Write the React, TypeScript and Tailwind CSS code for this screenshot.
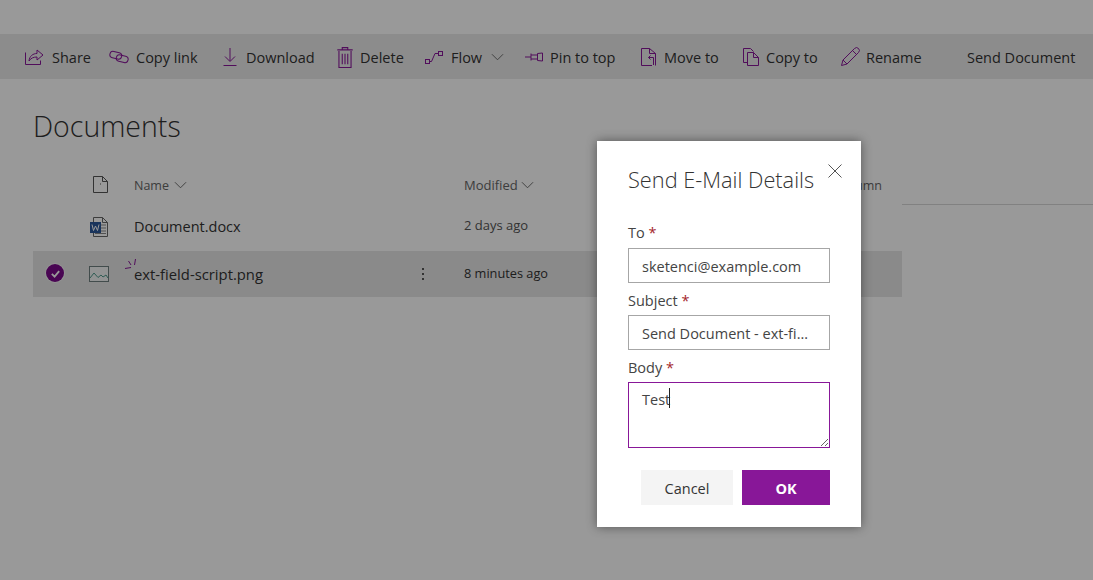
const purple = '#881798'

function Icon({ children, className }: { children: React.ReactNode; className?: string }) {
  return (
    <svg viewBox="0 0 20 20" fill="none" stroke={purple} strokeWidth="1" className={className ?? 'w-5 h-5 shrink-0'}>
      {children}
    </svg>
  )
}

function Chevron({ className }: { className: string }) {
  return (
    <svg viewBox="0 0 14 8" fill="none" stroke="#666" strokeWidth="1" className={className}>
      <path d="M1 1l6 6 6-6" />
    </svg>
  )
}

const icons = {
  share: (
    <Icon>
      <path d="M1.500 5.500v12h15v-4" />
      <path d="M5 14c.5-5 4-7.500 8-7.500V3l6 5-6 5V10c-3.500 0-6 1-8 4z" />
    </Icon>
  ),
  link: (
    <Icon>
      <rect x="0.800" y="5" width="12" height="6.500" rx="3.250" transform="rotate(14 6.800 8.250)" />
      <rect x="7.200" y="8.500" width="12" height="6.500" rx="3.250" transform="rotate(14 13.200 11.750)" />
    </Icon>
  ),
  download: (
    <Icon>
      <path d="M10 1v13M5 9.500l5 5 5-5M3.500 18.500h13" />
    </Icon>
  ),
  trash: (
    <Icon className="w-[22px] h-[22px] shrink-0">
      <path d="M4.500 4.500v15h11v-15M3 3.500h14M7.500 3.500V1.500h5v2M7.500 7v9.500M10 7v9.500M12.500 7v9.500" />
    </Icon>
  ),
  flow: (
    <Icon>
      <rect x="1.500" y="12.500" width="4" height="4" />
      <rect x="14.500" y="4.500" width="4" height="4" />
      <path d="M6 14.500h1.500L11 6.500h3" />
    </Icon>
  ),
  pin: (
    <Icon>
      <path d="M1 10h6M7 6.500v7M7 8h6.500M7 12h6.500M13.500 6.500l5-.5v8l-5-.5z" />
    </Icon>
  ),
  move: (
    <Icon>
      <path d="M13 18.500H2.500v-17h8l6 5v12" />
      <path d="M10.500 1.500v5h6M14.500 18v-7.500H9.500M11.500 8.500l-2 2 2 2" />
    </Icon>
  ),
  copy: (
    <Icon>
      <path d="M6.500 15.500h-4v-14h7l3 3" />
      <path d="M6.500 5.500h6l5 5v8h-11zM12.500 5.500v5h5" />
    </Icon>
  ),
  rename: (
    <Icon>
      <path d="M1.500 18.500l1.500-5.500L14.500 1.500a2.500 2.500 0 0 1 4 4L7 17zM3 13l4 4M12.500 3.500l4 4" />
    </Icon>
  ),
}

function ToolItem({ icon, label, className, iconBox }: { icon: React.ReactNode; label: string; className: string; iconBox: string }) {
  return (
    <div className={`flex items-center ${className}`}>
      <span className={`flex items-center ${iconBox}`}>{icon}</span>
      <span className="pt-[2px]">{label}</span>
    </div>
  )
}

export default function App() {
  return (
    <div className="relative w-[1093px] h-[580px] overflow-hidden bg-white font-['Open_Sans','Liberation_Sans',sans-serif] text-[#333]">
      <div className="pt-[34px]">
        {/* command bar */}
        <div className="h-[45px] bg-[#eaeaea] flex items-center text-[14.5px] pl-[24px] whitespace-nowrap">
          <ToolItem icon={icons.share} label="Share" className="w-[85px]" iconBox="w-[28px]" />
          <ToolItem icon={icons.link} label="Copy link" className="w-[111px]" iconBox="w-[27px]" />
          <ToolItem icon={icons.download} label="Download" className="w-[115px]" iconBox="w-[26px]" />
          <ToolItem icon={icons.trash} label="Delete" className="w-[89px]" iconBox="w-[26px] -ml-[1px] pl-0" />
          <div className="flex items-center w-[100px]">
            <span className="w-[27px] flex items-center">{icons.flow}</span>
            <span className="pt-[2px]">Flow</span>
            <Chevron className="w-[13px] h-[8px] ml-[9px]" />
          </div>
          <ToolItem icon={icons.pin} label="Pin to top" className="w-[115px]" iconBox="w-[26px]" />
          <ToolItem icon={icons.move} label="Move to" className="w-[102px]" iconBox="w-[25px]" />
          <ToolItem icon={icons.copy} label="Copy to" className="w-[99px]" iconBox="w-[25px]" />
          <ToolItem icon={icons.rename} label="Rename" className="w-[127px]" iconBox="w-[26px]" />
          <span className="pt-[2px]">Send Document</span>
        </div>

        <h1 className="ml-[33px] mt-[27px] h-[59px] text-[28.500px] leading-[40px] font-light text-[#333]">Documents</h1>

        {/* file list */}
        <div className="flex h-[40px] text-[12.500px] text-[#666]">
          <div className="w-[902px] shrink-0 flex items-center relative pt-[2px]">
            <svg viewBox="0 0 15 17" fill="none" stroke="#555" strokeWidth="1" className="absolute left-[93px] top-[11px] w-[15px] h-[17px]">
              <path d="M0.500 0.500h9l5 5v11h-14zM9.500 0.500v5h5" />
              <path d="M7 8h1" />
            </svg>
            <span className="ml-[134px]">Name</span>
            <Chevron className="w-[13px] h-[8px] ml-[5px] -mt-[2px]" />
            <span className="absolute left-[464px] text-[13px]">Modified</span>
            <Chevron className="absolute left-[521px] top-[16px] w-[13px] h-[8px]" />
            <span className="absolute right-[20px]">Add column</span>
          </div>
          <div className="flex-1 border-b border-[#d8d8d8]" />
        </div>

        <div className="flex items-center h-[46px] relative text-[14.500px] pb-[2px]">
          <svg viewBox="0 0 18 20" className="absolute left-[90px] top-[12px] w-[18px] h-[20px]" fill="none">
            <path d="M3.500 0.500h9l5 5v14h-14z" stroke="#666" fill="#fff" />
            <path d="M12.500 0.500v5h5" stroke="#666" />
            <path d="M11 8h5M11 11h5M11 14h5M5 16.500h11" stroke="#888" />
            <rect x="0" y="5" width="11" height="11" fill="#2b579a" />
            <path d="M2 7.500l1.500 6 2-4.500 2 4.500 1.500-6" stroke="#fff" />
          </svg>
          <span className="ml-[134px]">Document.docx</span>
          <span className="absolute left-[464px] -mt-[2px] text-[13px] text-[#555]">2 days ago</span>
        </div>

        <div className="flex items-center h-[46px] relative ml-[33px] w-[869px] bg-[#e6e6e6] text-[14.800px]">
          <span className="absolute left-[13px] top-[13px] w-[18px] h-[18px] rounded-full bg-[#7b0a8a] ring-1 ring-white/60 flex items-center justify-center">
            <svg viewBox="0 0 12 12" fill="none" stroke="#fff" strokeWidth="2" className="w-[11px] h-[11px]">
              <path d="M2 6.500l3 3 5-6" />
            </svg>
          </span>
          <svg viewBox="0 0 20 16" fill="none" className="absolute left-[56px] top-[15px] w-[20px] h-[16px]">
            <rect x="0.500" y="0.500" width="19" height="15" stroke="#6f7f7f" fill="#f4f6f6" />
            <path d="M1 12l4-5 4 4.500 3-2.500 2 2 3-2 2 3" stroke="#4f9a8c" />
          </svg>
          <svg viewBox="0 0 11 10" fill="none" stroke={purple} strokeWidth="1" className="absolute left-[92px] top-[8px] w-[11px] h-[10px]">
            <path d="M0 9.500l6-1M3.500 2l2.500 4M10.500 0l-1 6" />
          </svg>
          <span className="ml-[101px]">ext-field-script.png</span>
          <span className="absolute left-[389px] top-[17px] flex flex-col gap-[3px]">
            <i className="block w-[2px] h-[2px] bg-[#555]" />
            <i className="block w-[2px] h-[2px] bg-[#555]" />
            <i className="block w-[2px] h-[2px] bg-[#555]" />
          </span>
          <span className="absolute left-[431px] text-[12.750px]">8 minutes ago</span>
        </div>
      </div>

      {/* modal scrim */}
      <div className="absolute inset-0 bg-black/40" />

      {/* dialog */}
      <div className="absolute left-[597px] top-[141px] w-[264px] h-[386px] bg-white shadow-[0_0_10px_rgba(0,0,0,0.45)] pl-[31px] pr-[31px] pt-[25px]">
        <div className="h-[57px]">
          <h2 className="text-[21.750px] leading-[27px] font-light text-[#333] whitespace-nowrap">Send E-Mail Details</h2>
          <svg viewBox="0 0 14 14" fill="none" stroke="#555" strokeWidth="1" className="absolute right-[19px] top-[23px] w-[14px] h-[14px]">
            <path d="M0.500 0.500l13 13M13.500 0.500l-13 13" />
          </svg>
        </div>
        <div className="text-[14.500px] text-[#444]">
          <label className="block h-[25px] leading-[19px]">To <span className="text-[#a4262c]">*</span></label>
          <input
            readOnly
            defaultValue="sketenci@example.com"
            className="block w-[202px] h-[35px] border border-[#a6a6a6] px-[13px] pt-[2px] outline-none truncate"
          />
          <label className="block mt-[8px] h-[24px] leading-[19px]">Subject <span className="text-[#a4262c]">*</span></label>
          <input
            readOnly
            defaultValue="Send Document - ext-field-script.png"
            className="block w-[202px] h-[35px] border border-[#a6a6a6] px-[13px] pt-[2px] outline-none truncate"
          />
          <label className="block mt-[8px] h-[24px] leading-[19px]">Body <span className="text-[#a4262c]">*</span></label>
          <div className="relative w-[202px] h-[66px]">
            <textarea
              readOnly
              defaultValue="Test"
              className="block w-[202px] h-[66px] border border-[#881798] px-[13px] pt-[7px] leading-[20px] outline-none"
            />
            <span className="absolute left-[41px] top-[6px] w-px h-[20px] bg-[#222]" />
          </div>
        </div>
        <div className="flex justify-end gap-[9px] mt-[22px] w-[202px] text-[14.500px]">
          <button className="w-[92px] h-[35px] pt-[2px] bg-[#f4f4f4] text-[#333] font-medium">Cancel</button>
          <button className="w-[88px] h-[35px] pt-[2px] bg-[#881798] text-white font-bold">OK</button>
        </div>
      </div>
    </div>
  )
}
